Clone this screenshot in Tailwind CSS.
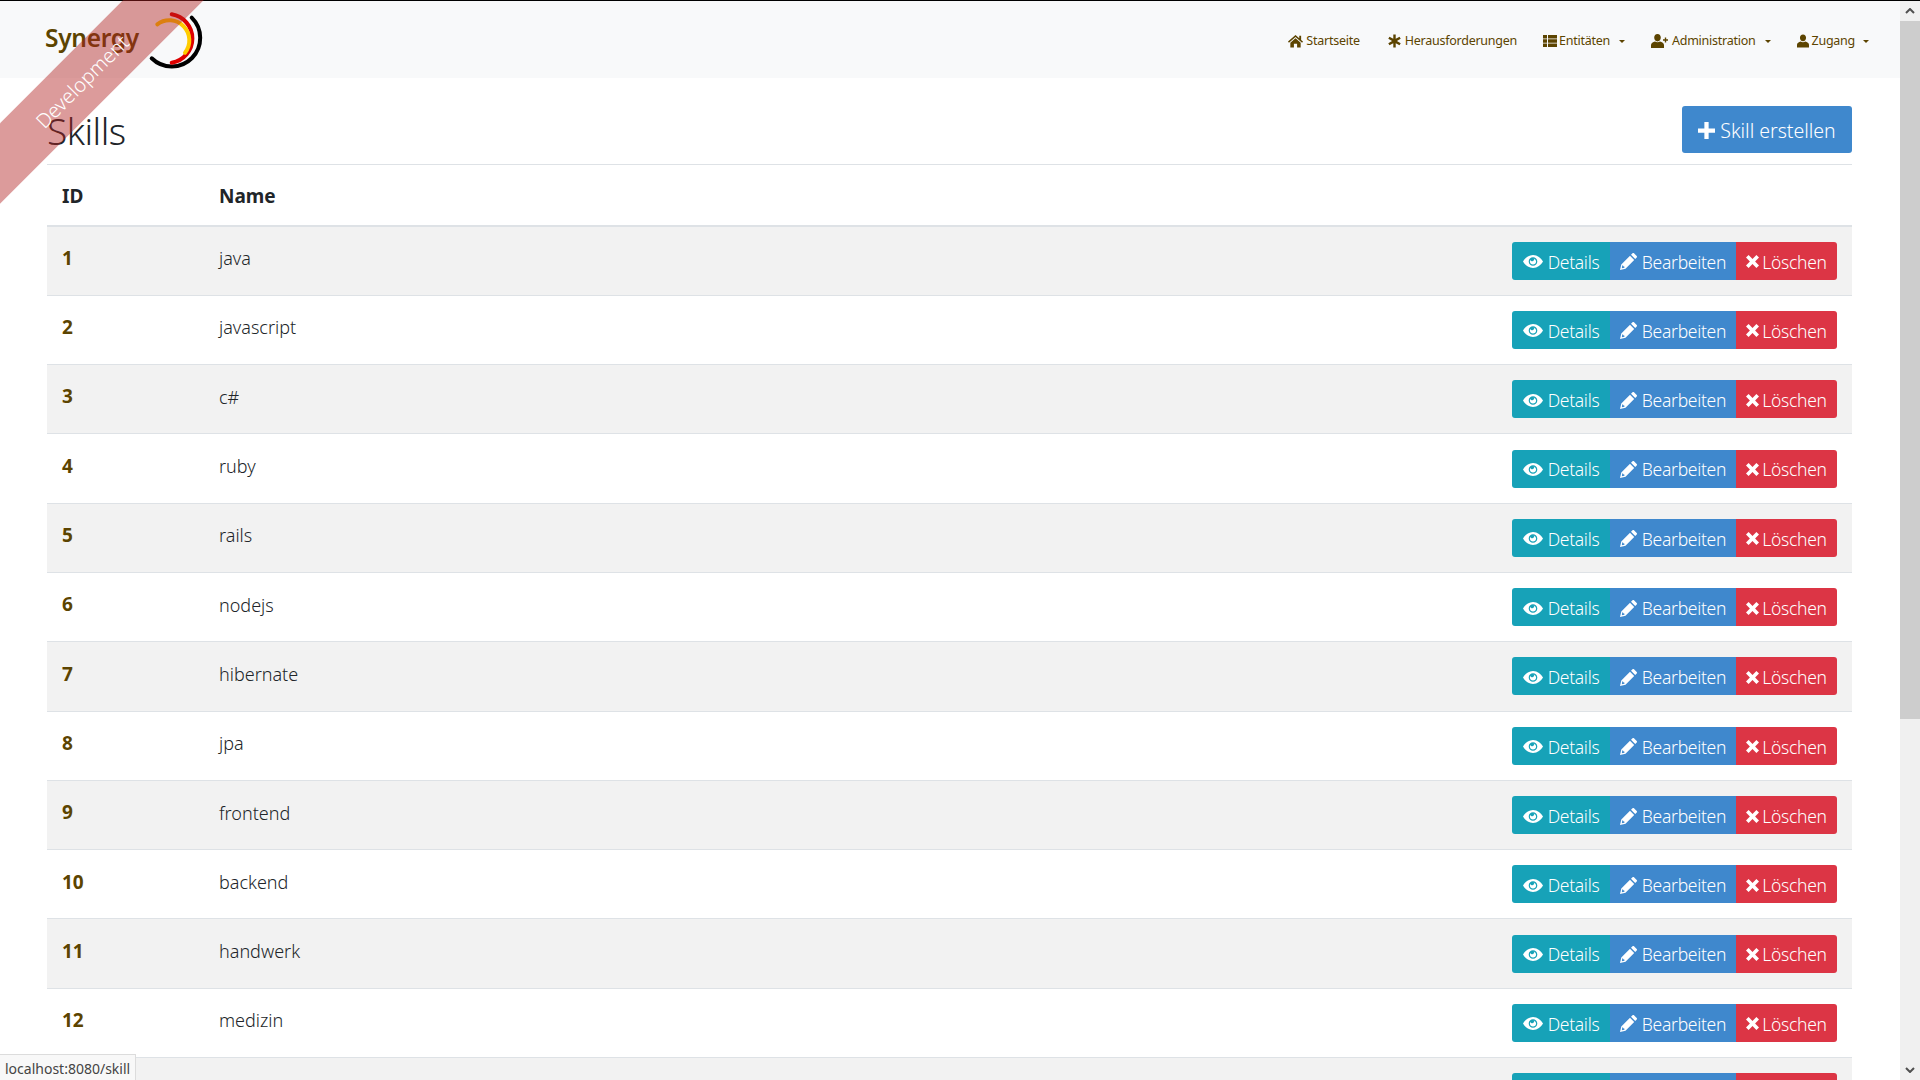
<!DOCTYPE html>
<html lang="de">
<head>
  <meta charset="UTF-8">
  <title>Skills</title>
  <script src="https://cdn.jsdelivr.net/npm/@tailwindcss/browser@4"></script>
</head>
<body class="h-screen overflow-hidden bg-white font-['Noto_Sans','Open_Sans',sans-serif] text-[#212529]">
  <!-- Icon set -->
  <svg class="hidden">
    <symbol id="i-home" viewBox="0 0 16 14"><path d="M8 0.5 L12 4 V1.5 H14 V5.8 L16 7.6 L15 8.8 L8 2.6 L1 8.8 L0 7.6 Z M8 4 L13.5 8.8 V14 H9.7 V10 H6.3 V14 H2.5 V8.8 Z"/></symbol>
    <symbol id="i-star" viewBox="0 0 14 14"><path d="M5.7 0 H8.3 V4.7 L12.4 2.3 L13.7 4.6 L9.6 7 L13.7 9.4 L12.4 11.7 L8.3 9.3 V14 H5.7 V9.3 L1.6 11.7 L0.3 9.4 L4.4 7 L0.3 4.6 L1.6 2.3 L5.7 4.7 Z"/></symbol>
    <symbol id="i-list" viewBox="0 0 14 12"><path d="M0 0 H4 V3.5 H0 Z M5 0 H14 V3.5 H5 Z M0 4.3 H4 V7.7 H0 Z M5 4.3 H14 V7.7 H5 Z M0 8.5 H4 V12 H0 Z M5 8.5 H14 V12 H5 Z"/></symbol>
    <symbol id="i-user" viewBox="0 0 13 14"><path d="M6.5 0 C8.6 0 9.8 1.6 9.8 3.6 C9.8 5.6 8.6 7.4 6.5 7.4 C4.4 7.4 3.2 5.6 3.2 3.6 C3.2 1.6 4.4 0 6.5 0 Z M4 7.6 C5.4 8.6 7.6 8.6 9 7.6 C11 8.2 13 9.2 13 11 V14 H0 V11 C0 9.2 2 8.2 4 7.6 Z"/></symbol>
    <symbol id="i-user-plus" viewBox="0 0 17 14"><path d="M6.5 0 C8.6 0 9.8 1.6 9.8 3.6 C9.8 5.6 8.6 7.4 6.5 7.4 C4.4 7.4 3.2 5.6 3.2 3.6 C3.2 1.6 4.4 0 6.5 0 Z M4 7.6 C5.4 8.6 7.6 8.6 9 7.6 C11 8.2 13 9.2 13 11 V14 H0 V11 C0 9.2 2 8.2 4 7.6 Z M13.8 3.5 H15.2 V5.3 H17 V6.7 H15.2 V8.5 H13.8 V6.7 H12 V5.3 H13.8 Z"/></symbol>
    <symbol id="i-eye" viewBox="0 0 20 13"><path fill-rule="evenodd" d="M10 0 C14.5 0 18 3 20 6.5 C18 10 14.5 13 10 13 C5.5 13 2 10 0 6.5 C2 3 5.5 0 10 0 Z M10 2.2 C7.6 2.2 5.7 4.1 5.7 6.5 C5.7 8.9 7.6 10.8 10 10.8 C12.4 10.8 14.3 8.9 14.3 6.5 C14.3 4.1 12.4 2.2 10 2.2 Z M10 3.4 C11.7 3.4 13.1 4.8 13.1 6.5 C13.1 8.2 11.7 9.6 10 9.6 C8.3 9.6 6.9 8.2 6.9 6.5 C6.9 5.9 7.1 5.4 7.4 4.9 C7.7 5.7 8.4 6.2 9.3 6.2 C10.4 6.2 11.2 5.4 11.2 4.3 C11.2 3.9 10.6 3.4 10 3.4 Z"/></symbol>
    <symbol id="i-pencil" viewBox="0 0 17 17"><path fill-rule="evenodd" d="M12.5 0.3 C13 -0.1 13.6 -0.1 14 0.3 L16.7 3 C17.1 3.4 17.1 4 16.7 4.5 L15.2 6 L11 1.8 Z M10 2.8 L14.2 7 L5.5 15.7 L0 17 L1.3 11.5 Z M2.3 12.5 L1.8 15.2 L4.5 14.7 L4.3 13.4 L3.2 13.3 L3 12.3 Z"/></symbol>
    <symbol id="i-x" viewBox="0 0 12 12"><path d="M2.4 0 L6 3.6 L9.6 0 L12 2.4 L8.4 6 L12 9.6 L9.6 12 L6 8.4 L2.4 12 L0 9.6 L3.6 6 L0 2.4 Z"/></symbol>
    <symbol id="i-plus" viewBox="0 0 16 16"><path d="M6 0 H10 V6 H16 V10 H10 V16 H6 V10 H0 V6 H6 Z"/></symbol>
  </svg>

  <div class="flex h-full flex-col">
    <div class="h-px shrink-0 bg-black"></div>
    <div class="flex min-h-0 flex-1">
      <div class="relative min-w-0 flex-1">
        <!-- Navbar -->
        <nav class="flex h-[77px] items-center justify-between bg-[#f8f9fa] pl-[45px] pr-[31px] text-[#5c4400]">
          <a href="#" class="flex items-center">
            <span class="mb-[3px] text-[24.5px] font-semibold tracking-[-0.3px]">Synergy</span>
            <svg class="ml-[6px] mt-[1px] h-[60px] w-[60px]" viewBox="145 9 60 60" fill="none" stroke-linecap="round">
              <path d="M191.7 16.7 A27.5 27.5 0 0 1 151.7 57.3" stroke="#000" stroke-width="4"/>
              <path d="M171.7 13.3 A24.5 24.5 0 0 1 171.7 61.7" stroke="#dd0000" stroke-width="4"/>
              <path d="M157.3 23.3 A20 20 0 0 1 185 51.7" stroke="#ffcc00" stroke-width="4"/>
            </svg>
          </a>
          <div class="mt-[3px] flex items-center text-[12.5px] tracking-[-0.25px]">
            <a href="#" class="flex items-center gap-[3px]"><svg class="h-[14px] w-[15px] fill-current"><use href="#i-home"/></svg>Startseite</a>
            <a href="#" class="ml-[28px] flex items-center gap-[4px]"><svg class="h-[14px] w-[13px] fill-current"><use href="#i-star"/></svg>Herausforderungen</a>
            <a href="#" class="ml-[26px] flex items-center gap-[2px]"><svg class="h-[12px] w-[14px] fill-current"><use href="#i-list"/></svg>Entitäten<span class="ml-[7px] mt-[1px] border-x-[3px] border-t-[3px] border-x-transparent border-t-current"></span></a>
            <a href="#" class="ml-[26px] flex items-center gap-[4px]"><svg class="h-[14px] w-[17px] fill-current"><use href="#i-user-plus"/></svg>Administration<span class="ml-[5px] mt-[1px] border-x-[3px] border-t-[3px] border-x-transparent border-t-current"></span></a>
            <a href="#" class="ml-[26px] flex items-center gap-[3px]"><svg class="h-[14px] w-[12px] fill-current"><use href="#i-user"/></svg>Zugang<span class="ml-[5px] mt-[1px] border-x-[3px] border-t-[3px] border-x-transparent border-t-current"></span></a>
          </div>
        </nav>

        <!-- Content -->
        <main class="pl-[47px] pr-[48px]">
          <div class="flex h-[87px] items-start justify-between border-b border-[#dee2e6]">
            <h1 class="mt-[25px] text-[37px] font-light leading-[56px] tracking-[-0.5px]">Skills</h1>
            <a href="#" class="mt-[28px] flex h-[47px] w-[170px] items-center justify-center gap-[5px] rounded-[3px] bg-[#3f88cd] pt-[2px] text-[19.5px] font-light text-white"><svg class="h-[17px] w-[17px] fill-current"><use href="#i-plus"/></svg>Skill erstellen</a>
          </div>

          <table class="w-full table-fixed border-collapse text-[18px]">
            <colgroup><col class="w-[158px]"><col><col class="w-[400px]"></colgroup>
            <thead>
              <tr class="h-[61px] border-b-2 border-[#dee2e6] text-left text-[19px] font-bold">
                <th class="pl-[15px] pt-[2px]">ID</th>
                <th class="pl-[14px] pt-[2px]">Name</th>
                <th></th>
              </tr>
            </thead>
            <tbody class="font-light">
              <tr class="h-[69.3px] border-b border-[#dee2e6] bg-[#f2f2f2]">
                <td class="pb-[5px] pl-[15px] text-[19px] font-bold text-[#5c4400]">1</td><td class="pb-[4px] pl-[14px]">java</td>
                <td class="pr-[15px]"><div class="flex h-[38px] justify-end overflow-hidden text-[17.5px] tracking-[-0.3px] text-white [&>a]:flex [&>a]:items-center [&>a]:pt-[2px]">
                  <a href="#" class="w-[98px] justify-center gap-[5px] rounded-l-[3px] bg-[#17a2b8]"><svg class="h-[13px] w-[20px] fill-current"><use href="#i-eye"/></svg>Details</a>
                  <a href="#" class="w-[126px] justify-center gap-[5px] bg-[#3f88cd]"><svg class="h-[17px] w-[17px] fill-current"><use href="#i-pencil"/></svg>Bearbeiten</a>
                  <a href="#" class="w-[101px] justify-center gap-[3px] rounded-r-[3px] bg-[#dc3545]"><svg class="h-[13px] w-[13px] fill-current"><use href="#i-x"/></svg>Löschen</a>
                </div></td>
              </tr>
              <tr class="h-[69.3px] border-b border-[#dee2e6]">
                <td class="pb-[5px] pl-[15px] text-[19px] font-bold text-[#5c4400]">2</td><td class="pb-[4px] pl-[14px]">javascript</td>
                <td class="pr-[15px]"><div class="flex h-[38px] justify-end overflow-hidden text-[17.5px] tracking-[-0.3px] text-white [&>a]:flex [&>a]:items-center [&>a]:pt-[2px]">
                  <a href="#" class="w-[98px] justify-center gap-[5px] rounded-l-[3px] bg-[#17a2b8]"><svg class="h-[13px] w-[20px] fill-current"><use href="#i-eye"/></svg>Details</a>
                  <a href="#" class="w-[126px] justify-center gap-[5px] bg-[#3f88cd]"><svg class="h-[17px] w-[17px] fill-current"><use href="#i-pencil"/></svg>Bearbeiten</a>
                  <a href="#" class="w-[101px] justify-center gap-[3px] rounded-r-[3px] bg-[#dc3545]"><svg class="h-[13px] w-[13px] fill-current"><use href="#i-x"/></svg>Löschen</a>
                </div></td>
              </tr>
              <tr class="h-[69.3px] border-b border-[#dee2e6] bg-[#f2f2f2]">
                <td class="pb-[5px] pl-[15px] text-[19px] font-bold text-[#5c4400]">3</td><td class="pb-[4px] pl-[14px]">c#</td>
                <td class="pr-[15px]"><div class="flex h-[38px] justify-end overflow-hidden text-[17.5px] tracking-[-0.3px] text-white [&>a]:flex [&>a]:items-center [&>a]:pt-[2px]">
                  <a href="#" class="w-[98px] justify-center gap-[5px] rounded-l-[3px] bg-[#17a2b8]"><svg class="h-[13px] w-[20px] fill-current"><use href="#i-eye"/></svg>Details</a>
                  <a href="#" class="w-[126px] justify-center gap-[5px] bg-[#3f88cd]"><svg class="h-[17px] w-[17px] fill-current"><use href="#i-pencil"/></svg>Bearbeiten</a>
                  <a href="#" class="w-[101px] justify-center gap-[3px] rounded-r-[3px] bg-[#dc3545]"><svg class="h-[13px] w-[13px] fill-current"><use href="#i-x"/></svg>Löschen</a>
                </div></td>
              </tr>
              <tr class="h-[69.3px] border-b border-[#dee2e6]">
                <td class="pb-[5px] pl-[15px] text-[19px] font-bold text-[#5c4400]">4</td><td class="pb-[4px] pl-[14px]">ruby</td>
                <td class="pr-[15px]"><div class="flex h-[38px] justify-end overflow-hidden text-[17.5px] tracking-[-0.3px] text-white [&>a]:flex [&>a]:items-center [&>a]:pt-[2px]">
                  <a href="#" class="w-[98px] justify-center gap-[5px] rounded-l-[3px] bg-[#17a2b8]"><svg class="h-[13px] w-[20px] fill-current"><use href="#i-eye"/></svg>Details</a>
                  <a href="#" class="w-[126px] justify-center gap-[5px] bg-[#3f88cd]"><svg class="h-[17px] w-[17px] fill-current"><use href="#i-pencil"/></svg>Bearbeiten</a>
                  <a href="#" class="w-[101px] justify-center gap-[3px] rounded-r-[3px] bg-[#dc3545]"><svg class="h-[13px] w-[13px] fill-current"><use href="#i-x"/></svg>Löschen</a>
                </div></td>
              </tr>
              <tr class="h-[69.3px] border-b border-[#dee2e6] bg-[#f2f2f2]">
                <td class="pb-[5px] pl-[15px] text-[19px] font-bold text-[#5c4400]">5</td><td class="pb-[4px] pl-[14px]">rails</td>
                <td class="pr-[15px]"><div class="flex h-[38px] justify-end overflow-hidden text-[17.5px] tracking-[-0.3px] text-white [&>a]:flex [&>a]:items-center [&>a]:pt-[2px]">
                  <a href="#" class="w-[98px] justify-center gap-[5px] rounded-l-[3px] bg-[#17a2b8]"><svg class="h-[13px] w-[20px] fill-current"><use href="#i-eye"/></svg>Details</a>
                  <a href="#" class="w-[126px] justify-center gap-[5px] bg-[#3f88cd]"><svg class="h-[17px] w-[17px] fill-current"><use href="#i-pencil"/></svg>Bearbeiten</a>
                  <a href="#" class="w-[101px] justify-center gap-[3px] rounded-r-[3px] bg-[#dc3545]"><svg class="h-[13px] w-[13px] fill-current"><use href="#i-x"/></svg>Löschen</a>
                </div></td>
              </tr>
              <tr class="h-[69.3px] border-b border-[#dee2e6]">
                <td class="pb-[5px] pl-[15px] text-[19px] font-bold text-[#5c4400]">6</td><td class="pb-[4px] pl-[14px]">nodejs</td>
                <td class="pr-[15px]"><div class="flex h-[38px] justify-end overflow-hidden text-[17.5px] tracking-[-0.3px] text-white [&>a]:flex [&>a]:items-center [&>a]:pt-[2px]">
                  <a href="#" class="w-[98px] justify-center gap-[5px] rounded-l-[3px] bg-[#17a2b8]"><svg class="h-[13px] w-[20px] fill-current"><use href="#i-eye"/></svg>Details</a>
                  <a href="#" class="w-[126px] justify-center gap-[5px] bg-[#3f88cd]"><svg class="h-[17px] w-[17px] fill-current"><use href="#i-pencil"/></svg>Bearbeiten</a>
                  <a href="#" class="w-[101px] justify-center gap-[3px] rounded-r-[3px] bg-[#dc3545]"><svg class="h-[13px] w-[13px] fill-current"><use href="#i-x"/></svg>Löschen</a>
                </div></td>
              </tr>
              <tr class="h-[69.3px] border-b border-[#dee2e6] bg-[#f2f2f2]">
                <td class="pb-[5px] pl-[15px] text-[19px] font-bold text-[#5c4400]">7</td><td class="pb-[4px] pl-[14px]">hibernate</td>
                <td class="pr-[15px]"><div class="flex h-[38px] justify-end overflow-hidden text-[17.5px] tracking-[-0.3px] text-white [&>a]:flex [&>a]:items-center [&>a]:pt-[2px]">
                  <a href="#" class="w-[98px] justify-center gap-[5px] rounded-l-[3px] bg-[#17a2b8]"><svg class="h-[13px] w-[20px] fill-current"><use href="#i-eye"/></svg>Details</a>
                  <a href="#" class="w-[126px] justify-center gap-[5px] bg-[#3f88cd]"><svg class="h-[17px] w-[17px] fill-current"><use href="#i-pencil"/></svg>Bearbeiten</a>
                  <a href="#" class="w-[101px] justify-center gap-[3px] rounded-r-[3px] bg-[#dc3545]"><svg class="h-[13px] w-[13px] fill-current"><use href="#i-x"/></svg>Löschen</a>
                </div></td>
              </tr>
              <tr class="h-[69.3px] border-b border-[#dee2e6]">
                <td class="pb-[5px] pl-[15px] text-[19px] font-bold text-[#5c4400]">8</td><td class="pb-[4px] pl-[14px]">jpa</td>
                <td class="pr-[15px]"><div class="flex h-[38px] justify-end overflow-hidden text-[17.5px] tracking-[-0.3px] text-white [&>a]:flex [&>a]:items-center [&>a]:pt-[2px]">
                  <a href="#" class="w-[98px] justify-center gap-[5px] rounded-l-[3px] bg-[#17a2b8]"><svg class="h-[13px] w-[20px] fill-current"><use href="#i-eye"/></svg>Details</a>
                  <a href="#" class="w-[126px] justify-center gap-[5px] bg-[#3f88cd]"><svg class="h-[17px] w-[17px] fill-current"><use href="#i-pencil"/></svg>Bearbeiten</a>
                  <a href="#" class="w-[101px] justify-center gap-[3px] rounded-r-[3px] bg-[#dc3545]"><svg class="h-[13px] w-[13px] fill-current"><use href="#i-x"/></svg>Löschen</a>
                </div></td>
              </tr>
              <tr class="h-[69.3px] border-b border-[#dee2e6] bg-[#f2f2f2]">
                <td class="pb-[5px] pl-[15px] text-[19px] font-bold text-[#5c4400]">9</td><td class="pb-[4px] pl-[14px]">frontend</td>
                <td class="pr-[15px]"><div class="flex h-[38px] justify-end overflow-hidden text-[17.5px] tracking-[-0.3px] text-white [&>a]:flex [&>a]:items-center [&>a]:pt-[2px]">
                  <a href="#" class="w-[98px] justify-center gap-[5px] rounded-l-[3px] bg-[#17a2b8]"><svg class="h-[13px] w-[20px] fill-current"><use href="#i-eye"/></svg>Details</a>
                  <a href="#" class="w-[126px] justify-center gap-[5px] bg-[#3f88cd]"><svg class="h-[17px] w-[17px] fill-current"><use href="#i-pencil"/></svg>Bearbeiten</a>
                  <a href="#" class="w-[101px] justify-center gap-[3px] rounded-r-[3px] bg-[#dc3545]"><svg class="h-[13px] w-[13px] fill-current"><use href="#i-x"/></svg>Löschen</a>
                </div></td>
              </tr>
              <tr class="h-[69.3px] border-b border-[#dee2e6]">
                <td class="pb-[5px] pl-[15px] text-[19px] font-bold text-[#5c4400]">10</td><td class="pb-[4px] pl-[14px]">backend</td>
                <td class="pr-[15px]"><div class="flex h-[38px] justify-end overflow-hidden text-[17.5px] tracking-[-0.3px] text-white [&>a]:flex [&>a]:items-center [&>a]:pt-[2px]">
                  <a href="#" class="w-[98px] justify-center gap-[5px] rounded-l-[3px] bg-[#17a2b8]"><svg class="h-[13px] w-[20px] fill-current"><use href="#i-eye"/></svg>Details</a>
                  <a href="#" class="w-[126px] justify-center gap-[5px] bg-[#3f88cd]"><svg class="h-[17px] w-[17px] fill-current"><use href="#i-pencil"/></svg>Bearbeiten</a>
                  <a href="#" class="w-[101px] justify-center gap-[3px] rounded-r-[3px] bg-[#dc3545]"><svg class="h-[13px] w-[13px] fill-current"><use href="#i-x"/></svg>Löschen</a>
                </div></td>
              </tr>
              <tr class="h-[69.3px] border-b border-[#dee2e6] bg-[#f2f2f2]">
                <td class="pb-[5px] pl-[15px] text-[19px] font-bold text-[#5c4400]">11</td><td class="pb-[4px] pl-[14px]">handwerk</td>
                <td class="pr-[15px]"><div class="flex h-[38px] justify-end overflow-hidden text-[17.5px] tracking-[-0.3px] text-white [&>a]:flex [&>a]:items-center [&>a]:pt-[2px]">
                  <a href="#" class="w-[98px] justify-center gap-[5px] rounded-l-[3px] bg-[#17a2b8]"><svg class="h-[13px] w-[20px] fill-current"><use href="#i-eye"/></svg>Details</a>
                  <a href="#" class="w-[126px] justify-center gap-[5px] bg-[#3f88cd]"><svg class="h-[17px] w-[17px] fill-current"><use href="#i-pencil"/></svg>Bearbeiten</a>
                  <a href="#" class="w-[101px] justify-center gap-[3px] rounded-r-[3px] bg-[#dc3545]"><svg class="h-[13px] w-[13px] fill-current"><use href="#i-x"/></svg>Löschen</a>
                </div></td>
              </tr>
              <tr class="h-[69.3px] border-b border-[#dee2e6]">
                <td class="pb-[5px] pl-[15px] text-[19px] font-bold text-[#5c4400]">12</td><td class="pb-[4px] pl-[14px]">medizin</td>
                <td class="pr-[15px]"><div class="flex h-[38px] justify-end overflow-hidden text-[17.5px] tracking-[-0.3px] text-white [&>a]:flex [&>a]:items-center [&>a]:pt-[2px]">
                  <a href="#" class="w-[98px] justify-center gap-[5px] rounded-l-[3px] bg-[#17a2b8]"><svg class="h-[13px] w-[20px] fill-current"><use href="#i-eye"/></svg>Details</a>
                  <a href="#" class="w-[126px] justify-center gap-[5px] bg-[#3f88cd]"><svg class="h-[17px] w-[17px] fill-current"><use href="#i-pencil"/></svg>Bearbeiten</a>
                  <a href="#" class="w-[101px] justify-center gap-[3px] rounded-r-[3px] bg-[#dc3545]"><svg class="h-[13px] w-[13px] fill-current"><use href="#i-x"/></svg>Löschen</a>
                </div></td>
              </tr>
              <tr class="h-[69.3px] border-b border-[#dee2e6] bg-[#f2f2f2]">
                <td></td><td></td>
                <td class="pr-[15px]"><div class="flex h-[38px] justify-end overflow-hidden text-[17.5px] tracking-[-0.3px] text-white [&>a]:flex [&>a]:items-center [&>a]:pt-[2px]">
                  <a href="#" class="w-[98px] justify-center gap-[5px] rounded-l-[3px] bg-[#17a2b8]"><svg class="h-[13px] w-[20px] fill-current"><use href="#i-eye"/></svg>Details</a>
                  <a href="#" class="w-[126px] justify-center gap-[5px] bg-[#3f88cd]"><svg class="h-[17px] w-[17px] fill-current"><use href="#i-pencil"/></svg>Bearbeiten</a>
                  <a href="#" class="w-[101px] justify-center gap-[3px] rounded-r-[3px] bg-[#dc3545]"><svg class="h-[13px] w-[13px] fill-current"><use href="#i-x"/></svg>Löschen</a>
                </div></td>
              </tr>
            </tbody>
          </table>
        </main>

        <!-- Development ribbon -->
        <div class="pointer-events-none absolute left-[-68px] top-[52px] flex h-[57px] w-[300px] -rotate-45 items-center justify-center bg-[#b22222]/45 text-[20px] font-light text-white">Development</div>
      </div>

      <!-- Scrollbar -->
      <div class="flex w-5 shrink-0 flex-col bg-[#f0f0f0] text-[#505050]">
        <div class="flex h-[20px] items-center justify-center"><svg class="h-[6px] w-[10px]" viewBox="0 0 10 6" fill="none" stroke="currentColor" stroke-width="2"><path d="M1 5 L5 1 L9 5"/></svg></div>
        <div class="h-[698px] bg-[#cdcdcd]"></div>
        <div class="mt-auto flex h-[20px] items-center justify-center"><svg class="h-[6px] w-[10px]" viewBox="0 0 10 6" fill="none" stroke="currentColor" stroke-width="2"><path d="M1 1 L5 5 L9 1"/></svg></div>
      </div>
    </div>
  </div>

  <!-- Browser status bubble -->
  <div class="fixed bottom-0 left-0 flex h-[26px] w-[136px] items-center border-r border-t border-[#dcdcdc] bg-[#f8f8f8] pl-[5px] pt-[2px] text-[14px] text-[#444]">localhost:8080/skill</div>
</body>
</html>
